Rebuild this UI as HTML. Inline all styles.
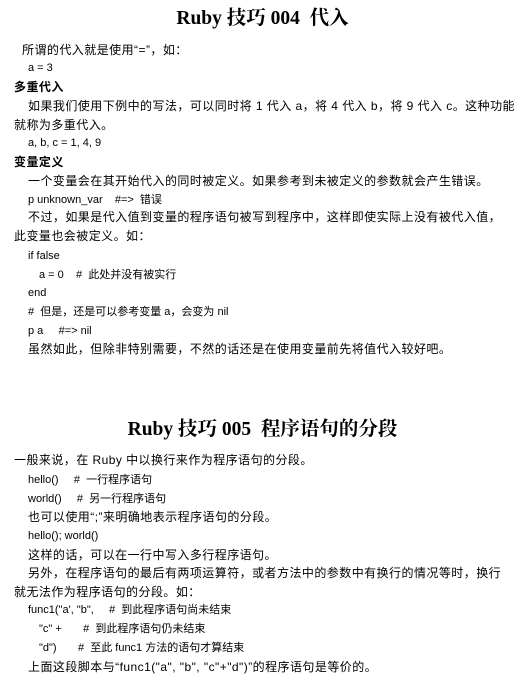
<!DOCTYPE html>
<html><head><meta charset="utf-8"><style>
body{margin:0;width:519px;height:681px;background:#fff;position:relative;overflow:hidden;color:#000;font-family:"Liberation Sans","Noto Sans CJK SC",sans-serif;font-size:12px}
.l{position:absolute;line-height:18px;height:18px;white-space:pre;letter-spacing:0.45px}
.t{position:absolute;left:0;width:519px;text-align:center;font-family:"Liberation Serif","Noto Serif CJK SC",serif;font-weight:bold;font-size:19.5px;line-height:22px;white-space:pre}
.c{font-size:11px;letter-spacing:0}
.b{font-weight:bold}
</style></head><body>
<div class="t" style="top:8px;left:3px">Ruby 技巧 004  代入</div>
<div class="l" style="top:41px;left:22px">所谓的代入就是使用“=”，如：</div>
<div class="l c" style="top:59px;left:28px">a = 3</div>
<div class="l b" style="top:78px;left:14px">多重代入</div>
<div class="l" style="top:97px;left:28px">如果我们使用下例中的写法，可以同时将 1 代入 a，将 4 代入 b，将 9 代入 c。这种功能</div>
<div class="l" style="top:116px;left:14px">就称为多重代入。</div>
<div class="l c" style="top:134px;left:28px">a, b, c = 1, 4, 9</div>
<div class="l b" style="top:153px;left:14px">变量定义</div>
<div class="l" style="top:172px;left:28px">一个变量会在其开始代入的同时被定义。如果参考到未被定义的参数就会产生错误。</div>
<div class="l c" style="top:191px;left:28px">p unknown_var    #=>  错误</div>
<div class="l" style="top:208px;left:28px">不过，如果是代入值到变量的程序语句被写到程序中，这样即使实际上没有被代入值，</div>
<div class="l" style="top:227px;left:14px">此变量也会被定义。如：</div>
<div class="l c" style="top:247px;left:28px">if false</div>
<div class="l c" style="top:266px;left:39px">a = 0    #  此处并没有被实行</div>
<div class="l c" style="top:284px;left:28px">end</div>
<div class="l c" style="top:303px;left:28px">#  但是，还是可以参考变量 a，会变为 nil</div>
<div class="l c" style="top:322px;left:28px">p a     #=> nil</div>
<div class="l" style="top:340px;left:28px">虽然如此，但除非特别需要，不然的话还是在使用变量前先将值代入较好吧。</div>
<div class="t" style="top:419px;left:3px">Ruby 技巧 005  程序语句的分段</div>
<div class="l" style="top:451px;left:14px">一般来说，在 Ruby 中以换行来作为程序语句的分段。</div>
<div class="l c" style="top:471px;left:28px">hello()     #  一行程序语句</div>
<div class="l c" style="top:490px;left:28px">world()     #  另一行程序语句</div>
<div class="l" style="top:508px;left:28px">也可以使用“;”来明确地表示程序语句的分段。</div>
<div class="l c" style="top:527px;left:28px">hello(); world()</div>
<div class="l" style="top:546px;left:28px">这样的话，可以在一行中写入多行程序语句。</div>
<div class="l" style="top:564px;left:28px">另外，在程序语句的最后有两项运算符，或者方法中的参数中有换行的情况等时，换行</div>
<div class="l" style="top:583px;left:14px">就无法作为程序语句的分段。如：</div>
<div class="l c" style="top:601px;left:28px">func1("a', "b",     #  到此程序语句尚未结束</div>
<div class="l c" style="top:620px;left:39px">"c" +       #  到此程序语句仍未结束</div>
<div class="l c" style="top:639px;left:39px">"d")       #  至此 func1 方法的语句才算结束</div>
<div class="l" style="top:658px;left:28px">上面这段脚本与“func1("a", "b", "c"+"d")”的程序语句是等价的。</div>
</body></html>
